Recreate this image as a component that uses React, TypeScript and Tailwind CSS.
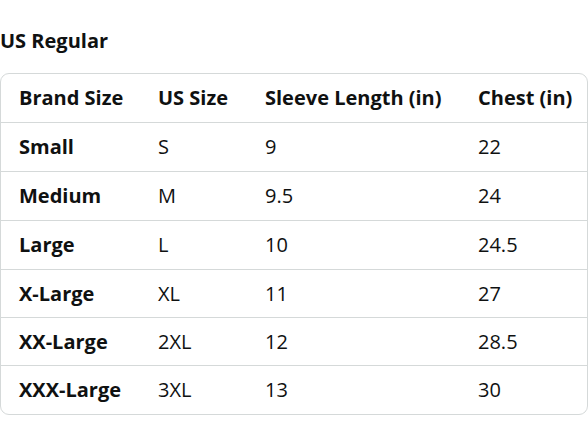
import React from 'react';

const rows = [
  { cells: ['Small', 'S', '9', '22'], h: 'h-[48px]' },
  { cells: ['Medium', 'M', '9.5', '24'], h: 'h-[48px]' },
  { cells: ['Large', 'L', '10', '24.5'], h: 'h-[48px]' },
  { cells: ['X-Large', 'XL', '11', '27'], h: 'h-[47px]' },
  { cells: ['XX-Large', '2XL', '12', '28.5'], h: 'h-[47px]' },
  { cells: ['XXX-Large', '3XL', '13', '30'], h: 'h-[48px]' },
];

const cols = 'grid grid-cols-[157px_107px_213px_1fr] items-center';

const App: React.FC = () => {
  return (
    <div className="w-[588px] h-[441px] bg-white text-[#0f1111] font-['Open_Sans',sans-serif]">
      <div className="pt-[27px]">
        {/* titre */}
        <h2 className="text-[20px] leading-[28px] font-bold">US Regular</h2>

        {/* tableau */}
        <div className="mt-[18px] border border-[#d5d9d9] rounded-[9px] text-[20px]">
          <div className={`${cols} h-[48px] font-bold`}>
            <div className="pl-[18px]">Brand Size</div>
            <div>US Size</div>
            <div>Sleeve Length (in)</div>
            <div>Chest (in)</div>
          </div>
          {rows.map((r) => (
            <div key={r.cells[0]} className={`${cols} ${r.h} box-content border-t border-[#d5d9d9]`}>
              <div className="pl-[18px] font-bold">{r.cells[0]}</div>
              <div>{r.cells[1]}</div>
              <div>{r.cells[2]}</div>
              <div>{r.cells[3]}</div>
            </div>
          ))}
        </div>
      </div>
    </div>
  );
};

export default App;
